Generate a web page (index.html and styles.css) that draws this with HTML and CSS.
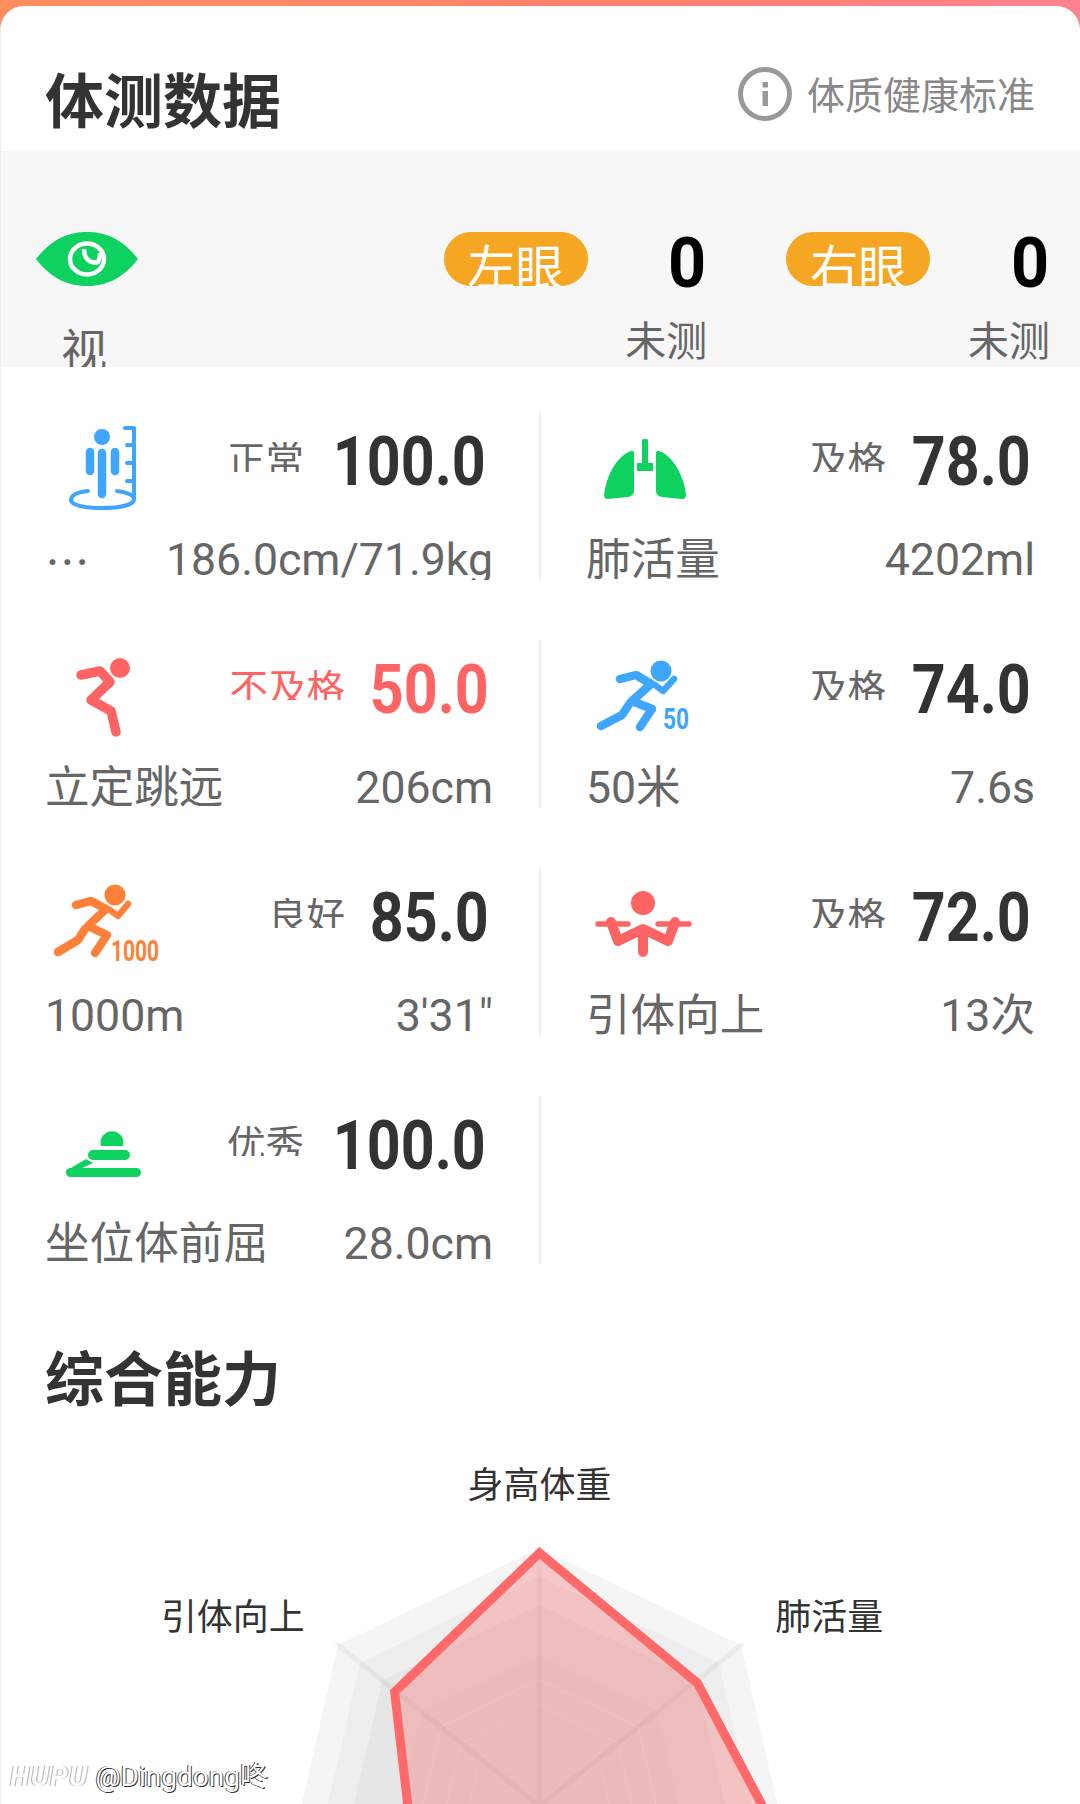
FILE: index.html
```html
<!DOCTYPE html>
<html lang="zh-CN">
<head>
<meta charset="utf-8">
<title>体测数据</title>
<link rel="stylesheet" href="styles.css">
</head>
<body>
<div class="page">
  <main class="card">
    <header class="head">
      <h1 class="title">体测数据</h1>
      <div class="standard">
        <svg class="info" viewBox="0 0 54 54"><circle cx="27" cy="27" r="24.5"/><rect class="info-mark" x="24.500" y="15" width="5.500" height="5.500"/><rect class="info-mark" x="24.500" y="24" width="5.500" height="15"/></svg>
        <span>体质健康标准</span>
      </div>
    </header>

    <section class="vision">
      <div class="vision-main">
        <svg class="eye" viewBox="36 232 102 54">
          <path class="green" d="M36 259 C52 238 70 232 87 232 C104 232 122 238 138 259 C122 280 104 286 87 286 C70 286 52 280 36 259Z"/>
          <ellipse class="eye-ring" cx="87" cy="259" rx="17" ry="15.5"/>
          <path class="eye-ring" d="M84 249 C84 259 90 264 98 262 C100 259 100 256 100 253"/>
        </svg>
        <span class="vision-name">视</span>
      </div>
      <div class="eye-group">
        <div class="eye-top"><span class="pill">左眼</span><b class="zero">0</b></div>
        <span class="untested">未测</span>
      </div>
      <div class="eye-group">
        <div class="eye-top"><span class="pill">右眼</span><b class="zero">0</b></div>
        <span class="untested">未测</span>
      </div>
    </section>

    <section class="grid">
      <article class="cell">
        <div class="cell-top">
          <svg class="icon blue-stroke" viewBox="45 420 120 100">
            <circle class="fill" cx="102" cy="437" r="8"/>
            <path class="thick" d="M102 453V494M90 452V471M115 452V471"/>
            <path class="thin" d="M125 428H134V499M127 445H134M127 463H134M127 481H134"/>
            <path class="thin" d="M88 491C78 492 71 495 71 500C71 505 84 508 102 508C120 508 134 505 134 499C134 495 126 492 117 491"/>
          </svg>
          <span class="status">正常</span>
          <span class="score wide"><span>100.0</span></span>
        </div>
        <div class="cell-bottom"><span class="dots">…</span><span>186.0cm/71.9kg</span></div>
      </article>
      <article class="cell">
        <div class="cell-top">
          <svg class="icon" viewBox="586 420 120 100">
            <path class="green" d="M642 440Q642 439 645 439Q648 439 648 440V463H653V471H637V463H642Z"/>
            <path class="green" d="M631 451C617 456 606 476 604 495Q604 499 608 499L628 497Q634 496 634 491V453Q634 450 631 451Z"/>
            <path class="green" d="M659 451C673 456 684 476 686 495Q686 499 682 499L662 497Q656 496 656 491V453Q656 450 659 451Z"/>
          </svg>
          <span class="status">及格</span>
          <span class="score"><span>78.0</span></span>
        </div>
        <div class="cell-bottom"><span>肺活量</span><span>4202ml</span></div>
      </article>

      <article class="cell">
        <div class="cell-top">
          <svg class="icon red-stroke" viewBox="45 648 120 100">
            <circle class="fill" cx="120" cy="668" r="10"/>
            <path class="limb" d="M81 675L100 671L110 682L91 700L111 711L116 732"/>
          </svg>
          <span class="status fail">不及格</span>
          <span class="score fail"><span>50.0</span></span>
        </div>
        <div class="cell-bottom"><span>立定跳远</span><span>206cm</span></div>
      </article>
      <article class="cell">
        <div class="cell-top">
          <svg class="icon blue-stroke" viewBox="586 648 120 100">
            <circle class="fill" cx="661" cy="671" r="10.5"/>
            <path class="limb runner" d="M620 679L636 675L651 684L632 701L652 709L640 727M630 703L622 715L601 726"/>
            <path class="limb runner-arm" d="M655 685L663 691L674 679"/>
            <text class="icon-num fill" x="663" y="729" textLength="26" lengthAdjust="spacingAndGlyphs">50</text>
          </svg>
          <span class="status">及格</span>
          <span class="score"><span>74.0</span></span>
        </div>
        <div class="cell-bottom"><span>50米</span><span>7.6s</span></div>
      </article>

      <article class="cell">
        <div class="cell-top">
          <svg class="icon orange-stroke" viewBox="45 876 120 100">
            <circle class="fill" cx="115" cy="895" r="10.5"/>
            <path class="limb runner" d="M76 905L91 901L106 909L88 926L107 935L95 953M85 929L78 940L58 952"/>
            <path class="limb runner-arm" d="M110 910L118 916L128 904"/>
            <text class="icon-num fill" x="111" y="961" textLength="48" lengthAdjust="spacingAndGlyphs">1000</text>
          </svg>
          <span class="status">良好</span>
          <span class="score"><span>85.0</span></span>
        </div>
        <div class="cell-bottom"><span>1000m</span><span>3'31"</span></div>
      </article>
      <article class="cell">
        <div class="cell-top">
          <svg class="icon red-stroke" viewBox="586 876 120 100">
            <circle class="fill" cx="643" cy="903" r="12"/>
            <path class="bar" d="M598 924H628M658 924H689"/>
            <path class="limb pull" d="M611 922L618 941L643 929L668 941L675 922M643 930V952"/>
          </svg>
          <span class="status">及格</span>
          <span class="score"><span>72.0</span></span>
        </div>
        <div class="cell-bottom"><span>引体向上</span><span>13次</span></div>
      </article>

      <article class="cell">
        <div class="cell-top">
          <svg class="icon" viewBox="45 1104 120 100">
            <path class="green" d="M101 1146A11.500 11.500 0 1 1 123 1146Z"/>
            <rect class="green" x="88" y="1150" width="42" height="10" rx="5"/>
            <rect class="green" x="66" y="1168" width="75" height="9" rx="4.500"/>
            <path class="green" d="M66 1171L86 1159L93 1163L78 1170Z"/>
          </svg>
          <span class="status">优秀</span>
          <span class="score wide"><span>100.0</span></span>
        </div>
        <div class="cell-bottom"><span>坐位体前屈</span><span>28.0cm</span></div>
      </article>
      <article class="cell"></article>
    </section>

    <h2 class="title section-title">综合能力</h2>

    <svg class="radar" viewBox="0 1440 1080 364">
      <defs>
        <polygon id="ring" points="0,-258 201.700,-160.900 251.500,57.400 111.900,232.500 -111.900,232.500 -251.500,57.400 -201.700,-160.900"/>
      </defs>
      <use href="#ring" class="ring-1" transform="translate(540 1806)"/>
      <use href="#ring" class="ring-2" transform="translate(540 1806) scale(.89)"/>
      <use href="#ring" class="ring-3" transform="translate(540 1806) scale(.78)"/>
      <use href="#ring" class="ring-4" transform="translate(540 1806) scale(.585)"/>
      <path class="axis" d="M540 1806V1548M540 1806L742 1645M540 1806L338 1645"/>
      <polygon class="data" points="540,1553 698,1683 762,1804 790,1860 412,1860 408,1804 395,1692"/>
      <use href="#ring" class="faint" transform="translate(540 1806) scale(.49)"/>
      <use href="#ring" class="faint" transform="translate(540 1806) scale(.39)"/>
      <use href="#ring" class="faint" transform="translate(540 1806) scale(.295)"/>
      <use href="#ring" class="faint" transform="translate(540 1806) scale(.2)"/>
      <text class="radar-label" x="540" y="1498" text-anchor="middle">身高体重</text>
      <text class="radar-label" x="233" y="1630" text-anchor="middle">引体向上</text>
      <text class="radar-label" x="830" y="1630" text-anchor="middle">肺活量</text>
    </svg>

    <div class="watermark"><i>HUPU</i> <span>@Dingdong咚</span></div>
  </main>
</div>
</body>
</html>
```

FILE: styles.css
```css
* { box-sizing: border-box; }
html, body { margin: 0; padding: 0; }
body {
  width: 1080px;
  height: 1804px;
  overflow: hidden;
  font-family: Roboto, "Noto Sans CJK SC", sans-serif;
  color: #666;
}
.page {
  height: 1804px;
  padding-top: 6px;
  background: linear-gradient(90deg, #ff8f5f 0%, #ff7f6c 60%, #ff8290 100%);
}
.card {
  position: relative;
  height: 1798px;
  overflow: hidden;
  background: #fff;
  border-left: 1px solid #eee;
  border-radius: 24px 24px 0 0;
}
.head {
  display: flex;
  justify-content: space-between;
  height: 145px;
  padding: 57px 45px 0 44px;
}
.title {
  margin: 0;
  font-family: "Noto Sans CJK SC", sans-serif;
  font-size: 59px;
  line-height: 70px;
  font-weight: 700;
  color: #333;
}
.standard {
  display: flex;
  align-items: center;
  gap: 15px;
  height: 56px;
  margin-top: 3px;
  font-family: "Noto Sans CJK SC", sans-serif;
  font-size: 38px;
  color: #888;
}
.standard span { position: relative; top: -2px; }
.info { width: 54px; height: 54px; }
.info circle { fill: none; stroke: #999; stroke-width: 5; }
.info .info-mark { fill: #999; }

.vision {
  display: flex;
  height: 216px;
  overflow: hidden;
  background: #f7f7f7;
  padding: 81px 30px 0 35px;
}
.vision-main {
  display: flex;
  flex-direction: column;
  width: 408px;
}
.eye { width: 102px; height: 54px; display: block; flex: none; }
.eye-ring { fill: none; stroke: #fff; stroke-width: 4.500; }
.vision-name {
  flex: none;
  margin: 31px 0 0 25px;
  font-size: 46px;
  line-height: 60px;
  font-family: "Noto Sans CJK SC", sans-serif;
}
.eye-group {
  display: flex;
  flex-direction: column;
  align-items: flex-end;
  width: 264px;
}
.eye-group + .eye-group { margin-left: 79px; }
.eye-top {
  display: flex;
  justify-content: space-between;
  align-items: flex-start;
  width: 100%;
}
.pill {
  display: block;
  width: 144px;
  height: 54px;
  overflow: hidden;
  background: #f5a623;
  border-radius: 27px;
  text-align: center;
  color: #fff;
  font-family: "Noto Sans CJK SC", sans-serif;
  font-size: 48px;
  line-height: 64px;
}
.zero {
  display: block;
  margin-right: 1px;
  font-size: 70px;
  line-height: 62px;
  color: #000;
  font-weight: 700;
  transform: scaleX(.95);
  transform-origin: right center;
}
.untested {
  margin-top: 16px;
  font-family: "Noto Sans CJK SC", sans-serif;
  font-size: 41px;
  line-height: 56px;
}

.grid {
  display: grid;
  grid-template-columns: 538px 541px;
  grid-auto-rows: 168px;
  row-gap: 60px;
  margin-top: 45px;
}
.cell {
  padding: 0 46px 0 44px;
  height: 168px;
}
.cell:nth-child(even) {
  padding: 0 45px 0 45px;
  border-left: 2px solid #eee;
}
.cell-top {
  display: flex;
  align-items: flex-start;
  height: 112px;
  padding-top: 8px;
}
.icon { width: 120px; height: 100px; flex: none; }
.green { fill: #0dd25f; }
.blue-stroke { color: #3fa6ff; }
.red-stroke { color: #ff6464; }
.orange-stroke { color: #ff8039; }
.icon .fill { fill: currentColor; }
.icon path.thick, .icon path.thin, .icon path.limb, .icon path.bar {
  fill: none;
  stroke: currentColor;
  stroke-linecap: round;
  stroke-linejoin: round;
}
.icon path.thick { stroke-width: 8.500; }
.icon path.thin { stroke-width: 4; }
.icon path.limb { stroke-width: 9.500; }
.icon path.runner { stroke-width: 8.500; }
.icon path.runner-arm { stroke-width: 6.500; }
.icon path.pull { stroke-width: 10; }
.icon path.bar { stroke-width: 5.500; }
.icon-num {
  font-family: Roboto, sans-serif;
  font-weight: 700;
  font-size: 30px;
}
.status {
  margin-left: auto;
  margin-top: 22px;
  height: 30px;
  overflow: hidden;
  font-family: "Noto Sans CJK SC", sans-serif;
  font-size: 38.500px;
  line-height: 30px;
  color: #666;
  white-space: nowrap;
}
.status.fail, .score.fail { color: #ff6464; }
.score {
  display: flex;
  justify-content: flex-end;
  flex: none;
  width: 115px;
  margin: 4px 4px 0 29px;
  font-size: 68px;
  line-height: 76px;
  font-weight: 700;
  color: #333;
  white-space: nowrap;
}
.score.wide { width: 148px; margin-left: 34px; margin-right: 7px; }
.score span {
  display: block;
  transform: scaleX(.87);
  transform-origin: right center;
}
.cell:nth-child(even) .score { margin-left: 30px; margin-right: 4px; }
.cell-bottom {
  display: flex;
  justify-content: space-between;
  height: 56px;
  overflow: hidden;
  font-size: 44.600px;
  line-height: 72px;
  white-space: nowrap;
}
.dots { font-family: "Noto Sans CJK SC", sans-serif; }

.section-title { margin: 77px 0 0 44px; }
.radar {
  display: block;
  width: 1079px;
  height: 364px;
  margin-top: 29px;
  margin-left: -1px;
}
.ring-1 { fill: #f5f5f5; }
.ring-2 { fill: #eeeeee; }
.ring-3 { fill: #e6e6e6; }
.ring-4 { fill: #e2e2e2; }
.axis { fill: none; stroke: #000; stroke-opacity: .04; stroke-width: 5; stroke-linecap: round; }
.data { fill: rgba(255, 95, 95, .3); stroke: #ff6969; stroke-width: 9; stroke-linejoin: miter; }
.faint { fill: none; stroke: #fff; stroke-opacity: .12; stroke-width: 2; vector-effect: non-scaling-stroke; }
.radar-label {
  font-family: "Noto Sans CJK SC", sans-serif;
  font-size: 36px;
  fill: #333;
}
.watermark {
  position: absolute;
  left: 9px;
  bottom: 10px;
  font-size: 28px;
  line-height: 34px;
  color: #fff;
  white-space: nowrap;
  text-shadow: 1px 1px 0 #333, -1px 0 0 #444;
}
.watermark i { font-weight: 700; letter-spacing: 1.500px; color: #fff; text-shadow: 1px 0 0 #aaa, -1px 0 0 #aaa; }
```
